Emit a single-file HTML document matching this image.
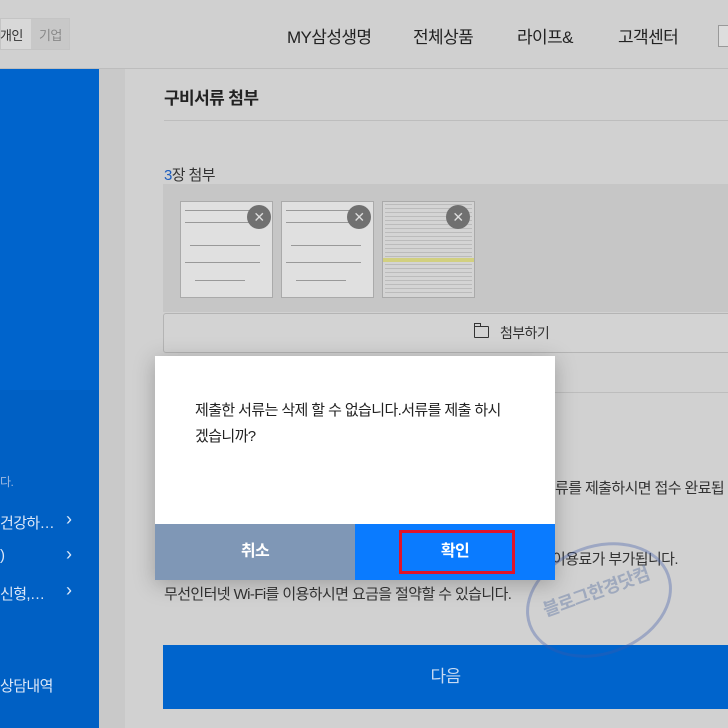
<!DOCTYPE html>
<html><head><meta charset="utf-8"><style>
*{margin:0;padding:0;box-sizing:border-box}
body{width:728px;height:728px;overflow:hidden;background:#c9c9c9;font-family:"Liberation Sans","Noto Sans CJK KR",sans-serif;position:relative;color:#222;letter-spacing:-0.6px}
.a{position:absolute}
.ln{position:absolute;height:1px;background:#999}
</style></head><body>
<div class="a" style="left:0;top:0;width:728px;height:69px;background:#d0d0d0;border-bottom:1px solid #bdbdbd"></div>
<div class="a" style="left:0;top:18px;width:70px;height:32px;background:#d8d8d8;border:1px solid #c4c4c4"></div>
<div class="a" style="left:31px;top:19px;width:38px;height:30px;background:#c8c8c8"></div>
<div class="a" style="left:0;top:25px;font-size:13px;color:#333">개인</div>
<div class="a" style="left:39px;top:25px;font-size:13px;color:#888">기업</div>
<div class="a" style="left:287px;top:23px;font-size:17px;color:#222">MY삼성생명</div>
<div class="a" style="left:413px;top:23px;font-size:17px;color:#222">전체상품</div>
<div class="a" style="left:517px;top:23px;font-size:17px;color:#222">라이프&amp;</div>
<div class="a" style="left:618px;top:23px;font-size:17px;color:#222">고객센터</div>
<div class="a" style="left:718px;top:25px;width:12px;height:22px;border:1px solid #999;background:#ddd"></div>
<div class="a" style="left:0;top:69px;width:99px;height:659px;background:#0064cc"></div>
<div class="a" style="left:0;top:390px;width:99px;height:338px;background:#0060c4"></div>
<div class="a" style="left:0;top:473px;font-size:12px;color:#9cb8e0">다.</div>
<div class="a" style="left:0;top:512px;font-size:15px;color:#dde8f8;width:99px">건강하… <span style="position:absolute;left:66px;font-size:18px;top:-3px">›</span></div>
<div class="a" style="left:0;top:547px;font-size:15px;color:#dde8f8;width:99px">)<span style="position:absolute;left:66px;font-size:18px;top:-3px">›</span></div>
<div class="a" style="left:0;top:583px;font-size:15px;color:#dde8f8;width:99px">신형,… <span style="position:absolute;left:66px;font-size:18px;top:-3px">›</span></div>
<div class="a" style="left:0;top:675px;font-size:15px;color:#dde8f8">상담내역</div>
<div class="a" style="left:125px;top:69px;width:603px;height:659px;background:#d1d1d1"></div>
<div class="a" style="left:164px;top:84px;font-size:17px;font-weight:bold;color:#222">구비서류 첨부</div>
<div class="a" style="left:164px;top:120px;width:564px;height:1px;background:#bdbdbd"></div>
<div class="a" style="left:164px;top:164px;font-size:15px;color:#333"><span style="color:#1f5fbf">3</span>장 첨부</div>
<div class="a" style="left:163px;top:184px;width:565px;height:128px;background:#c6c6c6"></div>
<div class="a" style="left:180px;top:201px;width:93px;height:97px;background:#e0e0e0;border:1px solid #aaa"></div>
<div class="a" style="left:281px;top:201px;width:93px;height:97px;background:#e0e0e0;border:1px solid #aaa"></div>
<div class="a" style="left:382px;top:201px;width:93px;height:97px;background:#d4d4d4;border:1px solid #aaa"></div>
<div class="ln" style="left:185px;top:210px;width:80px"></div><div class="ln" style="left:185px;top:222px;width:70px"></div><div class="ln" style="left:190px;top:245px;width:70px"></div><div class="ln" style="left:185px;top:262px;width:75px"></div><div class="ln" style="left:195px;top:280px;width:50px"></div>
<div class="ln" style="left:286px;top:210px;width:80px"></div><div class="ln" style="left:286px;top:222px;width:70px"></div><div class="ln" style="left:291px;top:245px;width:70px"></div><div class="ln" style="left:286px;top:262px;width:75px"></div><div class="ln" style="left:296px;top:280px;width:50px"></div>
<div class="a" style="left:385px;top:204px;width:87px;height:90px;background:repeating-linear-gradient(#bbb 0 1px,transparent 1px 4px)"></div>
<div class="a" style="left:383px;top:258px;width:91px;height:4px;background:#d2d080"></div>
<div class="a" style="left:247px;top:205px;width:24px;height:24px;border-radius:50%;background:#707070;color:#ddd;font-size:14px;text-align:center;line-height:24px">✕</div>
<div class="a" style="left:347px;top:205px;width:24px;height:24px;border-radius:50%;background:#707070;color:#ddd;font-size:14px;text-align:center;line-height:24px">✕</div>
<div class="a" style="left:446px;top:205px;width:24px;height:24px;border-radius:50%;background:#707070;color:#ddd;font-size:14px;text-align:center;line-height:24px">✕</div>
<div class="a" style="left:163px;top:313px;width:570px;height:40px;background:#d3d3d3;border:1px solid #b4b4b4;border-radius:3px"></div>
<div class="a" style="left:474px;top:326px;width:15px;height:12px;border:1px solid #333;border-radius:1px"></div>
<div class="a" style="left:474px;top:323px;width:7px;height:4px;border:1px solid #333;border-bottom:none"></div>
<div class="a" style="left:500px;top:323px;font-size:14px;color:#333">첨부하기</div>
<div class="a" style="left:555px;top:392px;width:173px;height:1px;background:#bdbdbd"></div>
<div class="a" style="left:555px;top:477px;font-size:15px;color:#333;white-space:nowrap">류를 제출하시면 접수 완료됩</div>
<div class="a" style="left:552px;top:548px;font-size:15px;color:#333;white-space:nowrap">이용료가 부가됩니다.</div>
<div class="a" style="left:164px;top:583px;font-size:15px;color:#333;white-space:nowrap">무선인터넷 Wi-Fi를 이용하시면 요금을 절약할 수 있습니다.</div>
<div class="a" style="left:163px;top:645px;width:565px;height:64px;background:#0064cc;color:#c8daf2;font-size:17px;text-align:center;line-height:64px">다음</div>
<div class="a" style="left:524px;top:545px;width:150px;height:110px;border:3px solid rgba(60,90,170,.35);border-radius:50%;transform:rotate(-20deg)"></div>
<div class="a" style="left:540px;top:578px;font-size:18px;font-weight:bold;color:rgba(110,130,170,.5);transform:rotate(-20deg)">블로그한경닷컴</div>
<div class="a" style="left:155px;top:356px;width:400px;height:224px;background:#fff;box-shadow:0 4px 20px rgba(0,0,0,.25)"></div>
<div class="a" style="left:195px;top:398px;width:340px;font-size:15px;line-height:26px;color:#222">제출한 서류는 삭제 할 수 없습니다.서류를 제출 하시<br>겠습니까?</div>
<div class="a" style="left:155px;top:524px;width:200px;height:56px;background:#7f97b6;color:#fff;font-size:16px;font-weight:bold;text-align:center;line-height:56px">취소</div>
<div class="a" style="left:355px;top:524px;width:200px;height:56px;background:#0a7bff;color:#fff;font-size:16px;font-weight:bold;text-align:center;line-height:56px">확인</div>
<div class="a" style="left:399px;top:530px;width:116px;height:44px;border:3px solid #e0132a"></div>
</body></html>
